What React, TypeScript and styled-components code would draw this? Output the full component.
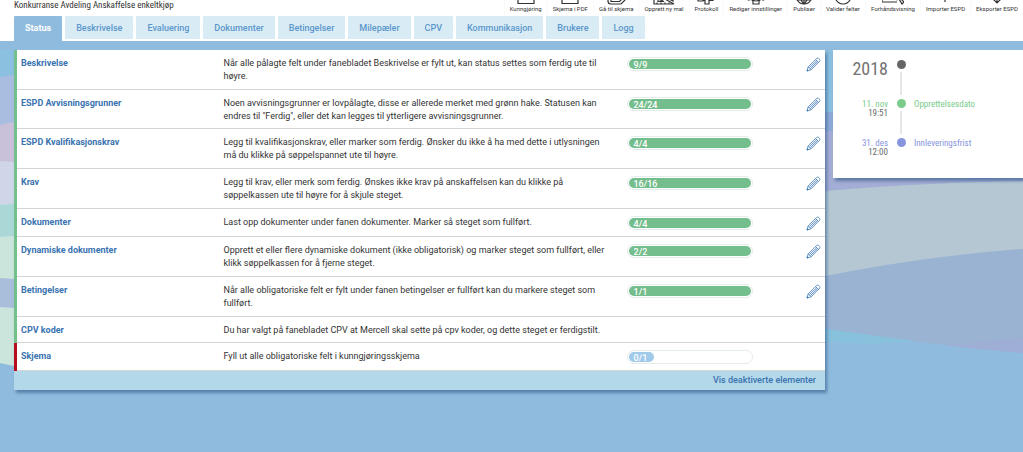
import React from "react";
import styled, { createGlobalStyle } from "styled-components";

const condensed = `"Roboto Condensed", "Liberation Sans Narrow", Roboto, sans-serif`;

const GlobalStyle = createGlobalStyle`
  * { box-sizing: border-box; }
  body { margin: 0; background: #fff; color: #333; font-family: Roboto, sans-serif; font-size: 9px; line-height: 13px; }
`;

const Page = styled.div`
  display: flex;
  flex-direction: column;
  min-height: 100vh;
  overflow: hidden;
`;

const Header = styled.header`
  display: flex;
  justify-content: space-between;
  align-items: flex-end;
  height: 16px;
  padding-left: 14px;
  overflow: hidden;
`;

const Title = styled.h1`
  margin: 0;
  padding-bottom: 4px;
  font-family: ${condensed};
  font-size: 9px;
  line-height: 13px;
  font-weight: 400;
  white-space: nowrap;
`;

const Toolbar = styled.div`
  display: flex;
  align-items: flex-end;
  flex: none;
`;

const Tool = styled.button`
  display: flex;
  flex-direction: column;
  align-items: center;
  padding: 0 5px 4px;
  border: 0;
  border-left: 1px solid #fafafa;
  background: none;
  color: #333;
  font-family: Roboto, sans-serif;
  font-size: 6px;
  line-height: 7px;
  white-space: nowrap;
  svg { display: block; }
`;

const Tabs = styled.nav`
  display: flex;
  align-items: flex-start;
  gap: 3px;
  padding-left: 14px;
`;

const Tab = styled.a<{ $active?: boolean }>`
  height: ${(p) => (p.$active ? 25 : 23)}px;
  padding: 6px 11px;
  border-radius: 1px 1px 0 0;
  background: ${(p) => (p.$active ? "#8fbcde" : "#d9ebf5")};
  color: ${(p) => (p.$active ? "#fff" : "#5b97cb")};
  font-weight: ${(p) => (p.$active ? 700 : 500)};
  text-decoration: none;
`;

const Main = styled.main`
  position: relative;
  display: grid;
  grid-template-columns: minmax(0, 811fr) minmax(0, 190fr);
  align-items: start;
  align-content: start;
  gap: 8px;
  flex: 1;
  padding: 9px 0 60px 14px;
  background: #8fbcde;
`;

const Backdrop = styled.svg`
  position: absolute;
  inset: 0;
  width: 100%;
  height: 411px;
`;

const Panel = styled.section`
  position: relative;
  background: #fff;
  box-shadow: 2px 3px 3px rgba(40, 80, 130, 0.55);
`;

const Steps = styled.table`
  width: 100%;
  height: 321px;
  border-collapse: collapse;
  table-layout: fixed;
`;

const Row = styled.tr<{ $state: "done" | "open" }>`
  border-bottom: 1px solid #d5d5d5;
  > th {
    border-left: 3px solid ${(p) => (p.$state === "done" ? "#74c08c" : "#b80d1c")};
  }
`;

const NameCell = styled.th`
  width: 204px;
  padding: 7px 0 5px 4px;
  vertical-align: top;
  text-align: left;
`;

const StepLink = styled.a`
  color: #3a73b0;
  font-weight: 700;
  text-decoration: none;
`;

const Cell = styled.td<{ $width?: number }>`
  width: ${(p) => (p.$width ? `${p.$width}px` : "auto")};
  padding: 7px 4px 5px;
  vertical-align: top;
`;

const TextCell = styled(Cell)`
  padding-right: 12px;
`;

const Track = styled.div`
  width: 126px;
  height: 14px;
  padding: 1px;
  border: 1px solid #e4ecea;
  border-radius: 7px;
`;

const Fill = styled.div<{ $full: boolean }>`
  width: ${(p) => (p.$full ? "100%" : "25px")};
  height: 10px;
  padding-left: 5px;
  border-radius: 5px;
  background: ${(p) => (p.$full ? "#74bd8c" : "#9fcaea")};
  color: #fff;
  line-height: 12px;
  font-weight: 500;
`;

const EditButton = styled.button`
  display: block;
  margin-left: auto;
  padding: 0;
  border: 0;
  background: none;
  svg { display: block; }
`;

const PanelFooter = styled.footer`
  display: flex;
  justify-content: flex-end;
  padding: 3px 9px;
  background: #b3d8ea;
  a { color: #3a73b0; font-weight: 500; text-decoration: none; }
`;

const Timeline = styled.ol`
  margin: 0;
  padding: 8px 0 18px 8px;
  list-style: none;
  font-family: ${condensed};
`;

const Event = styled.li<{ $color: string }>`
  display: grid;
  grid-template-columns: 47px 10px 1fr;
  column-gap: 8px;
  min-height: 39px;
  color: ${(p) => p.$color};
  &:last-child { min-height: 24px; }
`;

const When = styled.div`
  text-align: right;
  line-height: 10px;
  padding-top: 2px;
`;

const Year = styled.div`
  color: #737373;
  font-size: 18px;
  line-height: 22px;
  text-align: right;
`;

const Time = styled.div`
  color: #6a6a6a;
  line-height: 9px;
`;

const Marker = styled.div<{ $last?: boolean }>`
  display: flex;
  flex-direction: column;
  align-items: center;
  gap: 3px;
  padding: 2px 0 2px;
  &::before {
    content: "";
    flex: none;
    width: 9px;
    height: 9px;
    border-radius: 50%;
    background: currentColor;
  }
  &::after {
    content: "";
    flex: 1;
    width: 2px;
    background: ${(p) => (p.$last ? "transparent" : "#e6e6e6")};
  }
`;

const EventName = styled.div`
  padding-top: 1px;
`;

const Waves = () => (
  <Backdrop viewBox="0 41 1023 411" preserveAspectRatio="none" aria-hidden="true">
    <path fill="#8bc0e0" d="M0 41H1023V115H0Z" />
    <path fill="#8fbcde" d="M0 41H1023V50H0Z" />
    <path fill="#a9bde0" d="M0 77L14 75V130H0Z" />
    <path fill="#c9c0da" d="M0 125L14 122V163H0Z" />
    <path fill="#cfd6e8" d="M0 161L14 162V206H0Z" />
    <path fill="#a9d8d6" d="M0 205L14 204V238H0Z" />
    <path fill="#cbe5dc" d="M0 237L14 236V366L0 363Z" />
    <path fill="#a9bedb" d="M0 278L14 279V308L0 307Z" />
    <path fill="#8eaad7" d="M800 112H1023V140H800Z" />
    <path fill="#a3add5" d="M800 131H1023V200H800Z" />
    <path fill="#b4c7d3" d="M800 193Q910 183 1023 181V290H800Z" />
    <path fill="#9ab3d3" d="M800 281Q920 256 1023 249V353Q910 343 800 325Z" />
    <path fill="#8fbcde" d="M800 325Q910 343 1023 354V452H800Z" />
    <path fill="#88c1db" d="M800 325Q860 334 915 341L870 344L800 340Z" />
    <path fill="#9eaed5" d="M945 345L1023 338V353Q980 350 945 345Z" />
  </Backdrop>
);

const Pencil = () => (
  <svg width="15" height="15" viewBox="0 0 15 15" fill="none" stroke="#3f78b5" strokeWidth="0.8" strokeLinejoin="round">
    <path d="M1 14L2.2 9.8L10.8 1.4Q11.7 0.6 12.7 1.5L13.6 2.4Q14.4 3.3 13.6 4.2L5.1 12.8Z" />
    <path d="M2.2 9.8L5.1 12.8M9.6 2.6L12.5 5.4M3.4 10.6L10.8 3.6M4.4 11.6L11.7 4.6M1 14L2.4 13.5L1.5 12.5Z" />
  </svg>
);

const toolIcons: Record<string, React.ReactNode> = {
  box: <path d="M3 1V16.5H19V1M6 5H16" />,
  stack: <path d="M3 12V14Q3 17 6 17H16L20 13V6M6 8V14.5H14.5L18 11V4M9 12H15" />,
  template: <path d="M1 6V17H21ZM5 12V14.5H11ZM4 17V15.5M8 17V15.5M12 17V15.5M16 17V15.5M14 11L20 14V8" />,
  protocol: <path d="M3 9V14H8V9M8 13.5H10V17H14V13.5H18V5" />,
  gear: <path d="M1 9V12L4 13L6 12L8 14V17H14V14L16 12L18 13L21 12V9M7 10A4 4 0 0 0 15 10" />,
  globe: <path d="M11 1A8 8 0 1 0 11.1 1ZM3 9H19M5 13H17M11 1V17M11 1Q3 9 11 17Q19 9 11 1" />,
  check: <path d="M11 1A8 8 0 1 0 11.1 1ZM7 8L10 11L15 5" />,
  preview: <path d="M0 2V15H15M17 2V9M12 11A4 4 0 0 0 17 12L20 17L22 15L18 11" />,
  up: <path d="M11 15V2M7 6L11 2L15 6" />,
  down: <path d="M11 2V16M7 12L11 16L15 12" />,
};

const ToolIcon = ({ name }: { name: string }) => (
  <svg width="22" height="18" viewBox="0 0 22 18" fill="none" stroke="#333" strokeWidth="1.2">
    {toolIcons[name]}
  </svg>
);

const tools = [
  ["Kunngjøring", "box"],
  ["Skjema i PDF", "box"],
  ["Gå til skjema", "stack"],
  ["Opprett ny mal", "template"],
  ["Protokoll", "protocol"],
  ["Rediger innstillinger", "gear"],
  ["Publiser", "globe"],
  ["Valider felter", "check"],
  ["Forhåndsvisning", "preview"],
  ["Importer ESPD", "up"],
  ["Eksporter ESPD", "down"],
];

const tabs = ["Status", "Beskrivelse", "Evaluering", "Dokumenter", "Betingelser", "Milepæler", "CPV", "Kommunikasjon", "Brukere", "Logg"];

type Step = { name: string; text: string; done?: number; total?: number; editable?: boolean };

const steps: Step[] = [
  { name: "Beskrivelse", text: "Når alle pålagte felt under fanebladet Beskrivelse er fylt ut, kan status settes som ferdig ute til høyre.", done: 9, total: 9, editable: true },
  { name: "ESPD Avvisningsgrunner", text: "Noen avvisningsgrunner er lovpålagte, disse er allerede merket med grønn hake. Statusen kan endres til \"Ferdig\", eller det kan legges til ytterligere avvisningsgrunner.", done: 24, total: 24, editable: true },
  { name: "ESPD Kvalifikasjonskrav", text: "Legg til kvalifikasjonskrav, eller marker som ferdig. Ønsker du ikke å ha med dette i utlysningen må du klikke på søppelspannet ute til høyre.", done: 4, total: 4, editable: true },
  { name: "Krav", text: "Legg til krav, eller merk som ferdig. Ønskes ikke krav på anskaffelsen kan du klikke på søppelkassen ute til høyre for å skjule steget.", done: 16, total: 16, editable: true },
  { name: "Dokumenter", text: "Last opp dokumenter under fanen dokumenter. Marker så steget som fullført.", done: 4, total: 4, editable: true },
  { name: "Dynamiske dokumenter", text: "Opprett et eller flere dynamiske dokument (ikke obligatorisk) og marker steget som fullført, eller klikk søppelkassen for å fjerne steget.", done: 2, total: 2, editable: true },
  { name: "Betingelser", text: "Når alle obligatoriske felt er fylt under fanen betingelser er fullført kan du markere steget som fullført.", done: 1, total: 1, editable: true },
  { name: "CPV koder", text: "Du har valgt på fanebladet CPV at Mercell skal sette på cpv koder, og dette steget er ferdigstilt." },
  { name: "Skjema", text: "Fyll ut alle obligatoriske felt i kunngjøringsskjema", done: 0, total: 1 },
];

export default function App() {
  return (
    <Page>
      <GlobalStyle />
      <Header>
        <Title>Konkurranse Avdeling Anskaffelse enkeltkjøp</Title>
        <Toolbar>
          {tools.map(([label, icon]) => (
            <Tool key={label} type="button">
              <ToolIcon name={icon} />
              {label}
            </Tool>
          ))}
        </Toolbar>
      </Header>
      <Tabs>
        {tabs.map((tab, i) => (
          <Tab key={tab} href="#" $active={i === 0}>{tab}</Tab>
        ))}
      </Tabs>
      <Main>
        <Waves />
        <Panel>
          <Steps>
            <tbody>
              {steps.map((s) => (
                <Row key={s.name} $state={s.done === 0 ? "open" : "done"}>
                  <NameCell scope="row"><StepLink href="#">{s.name}</StepLink></NameCell>
                  <TextCell $width={403}>{s.text}</TextCell>
                  <Cell $width={134}>
                    {s.total !== undefined && (
                      <Track>
                        <Fill $full={s.done === s.total}>{s.done}/{s.total}</Fill>
                      </Track>
                    )}
                  </Cell>
                  <Cell>
                    {s.editable && (
                      <EditButton type="button" aria-label={`Rediger ${s.name}`}><Pencil /></EditButton>
                    )}
                  </Cell>
                </Row>
              ))}
            </tbody>
          </Steps>
          <PanelFooter><a href="#">Vis deaktiverte elementer</a></PanelFooter>
        </Panel>
        <Panel>
          <Timeline>
            <Event $color="#666666">
              <Year>2018</Year>
              <Marker />
            </Event>
            <Event $color="#7acb8c">
              <When>11. nov<Time>19:51</Time></When>
              <Marker />
              <EventName>Opprettelsesdato</EventName>
            </Event>
            <Event $color="#8794de">
              <When>31. des<Time>12:00</Time></When>
              <Marker $last />
              <EventName>Innleveringsfrist</EventName>
            </Event>
          </Timeline>
        </Panel>
      </Main>
    </Page>
  );
}
